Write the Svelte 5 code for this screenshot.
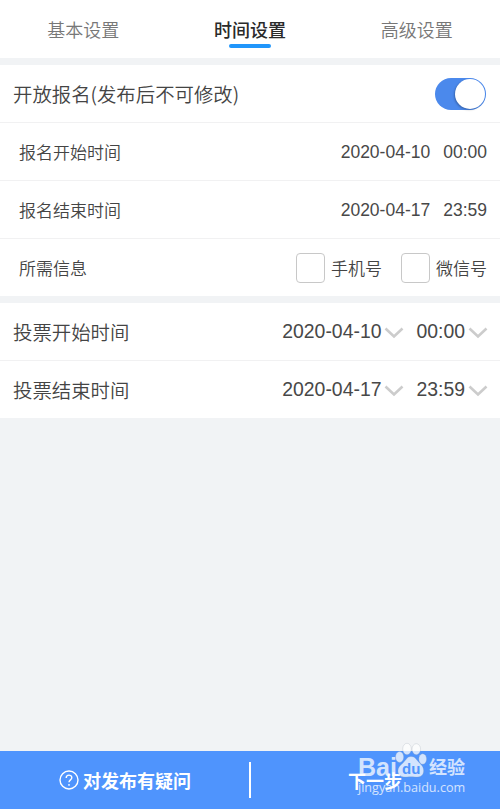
<script lang="ts">
  type Tab = { id: string; label: string };
  type TimeRow = { label: string; date: string; time: string };

  const tabs: Tab[] = [
    { id: 'basic', label: '基本设置' },
    { id: 'time', label: '时间设置' },
    { id: 'advanced', label: '高级设置' }
  ];

  const signupRows: TimeRow[] = [
    { label: '报名开始时间', date: '2020-04-10', time: '00:00' },
    { label: '报名结束时间', date: '2020-04-17', time: '23:59' }
  ];

  const voteRows: TimeRow[] = [
    { label: '投票开始时间', date: '2020-04-10', time: '00:00' },
    { label: '投票结束时间', date: '2020-04-17', time: '23:59' }
  ];

  let activeTab = $state('time');
  let signupOpen = $state(true);
  let fields = $state([
    { label: '手机号', checked: false },
    { label: '微信号', checked: false }
  ]);
</script>

{#snippet chevron()}
  <svg class="chevron" viewBox="0 0 20 12" aria-hidden="true">
    <path d="M1.5 1.5 L10 9.5 L18.5 1.5" />
  </svg>
{/snippet}

<div class="page">
  <nav class="tabs">
    {#each tabs as tab (tab.id)}
      <button
        type="button"
        class="tab"
        class:active={activeTab === tab.id}
        onclick={() => (activeTab = tab.id)}
      >
        {tab.label}
      </button>
    {/each}
  </nav>

  <section class="group">
    <div class="row">
      <span class="label">开放报名(发布后不可修改)</span>
      <button
        type="button"
        class="switch"
        class:on={signupOpen}
        role="switch"
        aria-checked={signupOpen}
        aria-label="开放报名"
        onclick={() => (signupOpen = !signupOpen)}
      >
        <span class="knob"></span>
      </button>
    </div>
    {#each signupRows as row (row.label)}
      <div class="row sub">
        <span class="label">{row.label}</span>
        <div class="values">
          <span>{row.date}</span>
          <span>{row.time}</span>
        </div>
      </div>
    {/each}
    <div class="row sub">
      <span class="label">所需信息</span>
      <div class="checks">
        {#each fields as field (field.label)}
          <label class="check">
            <input type="checkbox" bind:checked={field.checked} />
            <span class="label">{field.label}</span>
          </label>
        {/each}
      </div>
    </div>
  </section>

  <section class="group">
    {#each voteRows as row (row.label)}
      <div class="row">
        <span class="label">{row.label}</span>
        <div class="pickers">
          <span class="picker">{row.date}{@render chevron()}</span>
          <span class="picker">{row.time}{@render chevron()}</span>
        </div>
      </div>
    {/each}
  </section>

  <footer class="actions">
    <button type="button" class="action">
      <svg class="help" viewBox="0 0 20 20" aria-hidden="true">
        <circle cx="10" cy="10" r="9" />
        <path d="M7.2 8 C7.2 4.2 12.8 4.3 12.8 7.8 C12.8 9.8 10 10 10 12.2" />
        <path d="M10 14 V15.8" />
      </svg>
      <span>对发布有疑问</span>
    </button>
    <button type="button" class="action next">下一步</button>

    <div class="watermark">
      <div class="brand">
        <span class="bai">Bai</span>
        <span class="paw">
          <svg viewBox="0 0 32 35" aria-hidden="true">
            <ellipse cx="4.6" cy="14" rx="4.1" ry="5.4" />
            <ellipse cx="12" cy="6" rx="4.3" ry="5.7" />
            <ellipse cx="21.3" cy="6.2" rx="4.3" ry="5.5" />
            <ellipse cx="27.7" cy="16" rx="3.9" ry="5.2" />
            <path d="M16 13.5 C20.5 13.5 21.5 17 24.5 20 C28 23 29 26 28.5 29 C28 33 24.5 34.5 20 34 C17 33.6 15 33.6 12 34 C7.5 34.5 3.5 33 3 29 C2.5 25 5 22.5 8 20 C11 17 12 13.5 16 13.5 Z" />
          </svg>
          <span class="du">du</span>
        </span>
        <span class="jy">经验</span>
      </div>
      <div class="site">jingyan.baidu.com</div>
    </div>
  </footer>
</div>

<style>
  :global(body) {
    background: #f1f3f5;
  }
  .page {
    display: flex;
    flex-direction: column;
    gap: 7px;
    height: 809px;
    background: #f1f3f5;
    color: #484848;
    font-family: 'Liberation Sans', 'Noto Sans CJK SC', sans-serif;
  }
  button {
    border: 0;
    padding: 0;
    background: none;
    color: inherit;
    font: inherit;
    cursor: pointer;
  }
  .tabs {
    display: grid;
    grid-template-columns: repeat(3, 1fr);
    height: 58px;
    background: #fff;
  }
  .tab {
    position: relative;
    color: #777;
    font-size: 18px;
    font-family: 'Noto Sans CJK SC', sans-serif;
    font-weight: 350;
  }
  .tab.active {
    color: #2a2a2a;
    font-weight: 500;
  }
  .tab.active::after {
    content: '';
    position: absolute;
    left: 50%;
    bottom: 10px;
    width: 42px;
    height: 4px;
    margin-left: -21px;
    border-radius: 2px;
    background: #2196fb;
  }
  .group {
    background: #fff;
  }
  .row {
    display: flex;
    align-items: center;
    justify-content: space-between;
    box-sizing: border-box;
    height: 58px;
    padding: 0 13px;
    border-bottom: 1px solid #f1f1f2;
    font-size: 19.4px;
    white-space: nowrap;
  }
  .row:last-child {
    height: 57px;
    border-bottom: 0;
  }
  .row.sub {
    padding-left: 19px;
    font-size: 17px;
  }
  .label {
    color: #444;
    font-family: 'Noto Sans CJK SC', sans-serif;
    font-weight: 350;
    line-height: 28px;
  }
  .values {
    display: flex;
    gap: 13px;
    padding-top: 2px;
    font-size: 17.5px;
  }
  .switch {
    display: flex;
    box-sizing: border-box;
    width: 51px;
    height: 32px;
    padding: 1px;
    border-radius: 16px;
    background: #ccc;
    margin-right: 1px;
  }
  .switch.on {
    justify-content: flex-end;
    background: #4b89ec;
  }
  .knob {
    width: 30px;
    height: 30px;
    border-radius: 50%;
    background: #fff;
    box-shadow: -1px 1px 2px rgba(0, 0, 0, 0.25);
  }
  .checks {
    display: flex;
    gap: 19px;
  }
  .check {
    display: flex;
    align-items: center;
    gap: 6px;
  }
  .check input {
    appearance: none;
    box-sizing: border-box;
    width: 29px;
    height: 30px;
    margin: 0;
    border: 1px solid #c8c8c8;
    border-radius: 4px;
    background: #fff;
  }
  .check input:checked {
    background: #4b89ec;
  }
  .pickers {
    display: flex;
    gap: 13px;
  }
  .picker {
    display: flex;
    align-items: center;
    gap: 3px;
    font-size: 19.4px;
  }
  .chevron {
    width: 20px;
    height: 12px;
    margin-top: 3px;
    margin-right: -1px;
    fill: none;
    stroke: #ccc;
    stroke-width: 2.6;
  }
  .actions {
    position: relative;
    display: grid;
    grid-template-columns: 1fr 1fr;
    height: 58px;
    margin-top: auto;
    background: #4f94fd;
    color: #fff;
    font-size: 18px;
    font-weight: 700;
  }
  .action {
    display: flex;
    align-items: center;
    justify-content: center;
    gap: 4px;
    padding-bottom: 1px;
  }
  .next {
    position: relative;
  }
  .next::before {
    content: '';
    position: absolute;
    left: -1px;
    top: 11px;
    width: 2px;
    height: 36px;
    background: #fff;
  }
  .help {
    width: 20px;
    height: 20px;
    fill: none;
    stroke: #fff;
    stroke-width: 1.4;
  }
  .watermark {
    position: absolute;
    left: 358px;
    top: -8px;
    width: 108px;
    color: #fff;
    opacity: 0.75;
    pointer-events: none;
  }
  .brand {
    display: flex;
    align-items: flex-end;
    height: 35px;
    line-height: 20px;
  }
  .bai {
    width: 37px;
    font-size: 25px;
    line-height: 22px;
  }
  .paw {
    position: relative;
    width: 32px;
    height: 35px;
  }
  .paw svg {
    display: block;
    width: 32px;
    height: 35px;
    overflow: visible;
    fill: #fff;
    stroke: rgba(140, 150, 165, 0.35);
    stroke-width: 0.8;
  }
  .du {
    position: absolute;
    left: 7px;
    bottom: 2px;
    color: #4f94fd;
    font-size: 15px;
    line-height: 15px;
  }
  .jy {
    margin-left: 2px;
    font-size: 18px;
    line-height: 20px;
  }
  .site {
    font-family: 'Open Sans', sans-serif;
    font-size: 12.6px;
    font-weight: 500;
    line-height: 19px;
  }
</style>
